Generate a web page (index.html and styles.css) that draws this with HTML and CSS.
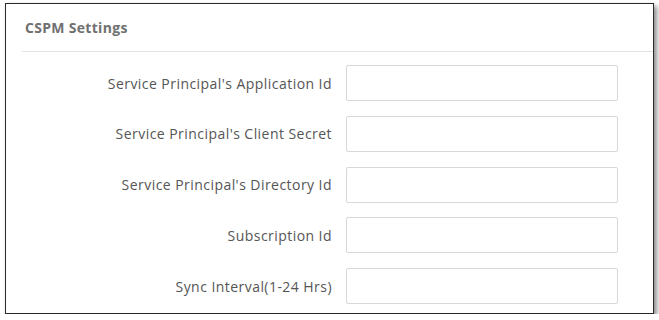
FILE: index.html
```html
<!DOCTYPE html>
<html lang="en">
<head>
    <meta charset="UTF-8">
    <meta name="viewport" content="width=device-width, initial-scale=1.0">
    <title>CSPM Settings</title>
    <link rel="stylesheet" href="styles.css">
</head>
<body>

<div class="panel">
    <div class="panel-header">CSPM Settings</div>

    <form class="settings-form">
        <label class="field-label" for="appId">Service Principal's Application Id</label>
        <input class="field-input" type="text" id="appId">

        <label class="field-label" for="clientSecret">Service Principal's Client Secret</label>
        <input class="field-input" type="text" id="clientSecret">

        <label class="field-label" for="directoryId">Service Principal's Directory Id</label>
        <input class="field-input" type="text" id="directoryId">

        <label class="field-label" for="subscriptionId">Subscription Id</label>
        <input class="field-input" type="text" id="subscriptionId">

        <label class="field-label" for="syncInterval">Sync Interval(1-24 Hrs)</label>
        <input class="field-input" type="text" id="syncInterval">
    </form>
</div>

</body>
</html>
```

FILE: styles.css
```css
/* General styling */
body {
    margin: 0;
    background: #fff;
    font-family: "Open Sans", "Noto Sans", Arial, sans-serif;
    color: #555;
}

.panel {
    box-sizing: border-box;
    width: 649px;
    height: 311px;
    margin: 3px 0 0 5px;
    background: #fff;
    border: 1px solid #2a2a2a;
    box-shadow: 3px 3px 5px rgba(0, 0, 0, 0.45);
}

/* Header */
.panel-header {
    display: flex;
    align-items: center;
    height: 47px;
    margin-left: 16px;
    padding-left: 3px;
    border-bottom: 1px solid #e2e2e2;
    font-size: 14px;
    font-weight: bold;
    letter-spacing: 0.3px;
    color: #707070;
}

/* Form rows */
.settings-form {
    display: grid;
    grid-template-columns: 1fr 272px;
    column-gap: 14px;
    row-gap: 14.75px;
    align-items: center;
    padding: 13px 35px 0 0;
    margin: 0;
}

.field-label {
    text-align: right;
    font-size: 14px;
    letter-spacing: 0.45px;
    color: #555;
}

.field-input {
    box-sizing: border-box;
    width: 272px;
    height: 36px;
    margin: 0;
    border: 1px solid #d8d8d8;
    border-radius: 2px;
    background: #fff;
}
```
